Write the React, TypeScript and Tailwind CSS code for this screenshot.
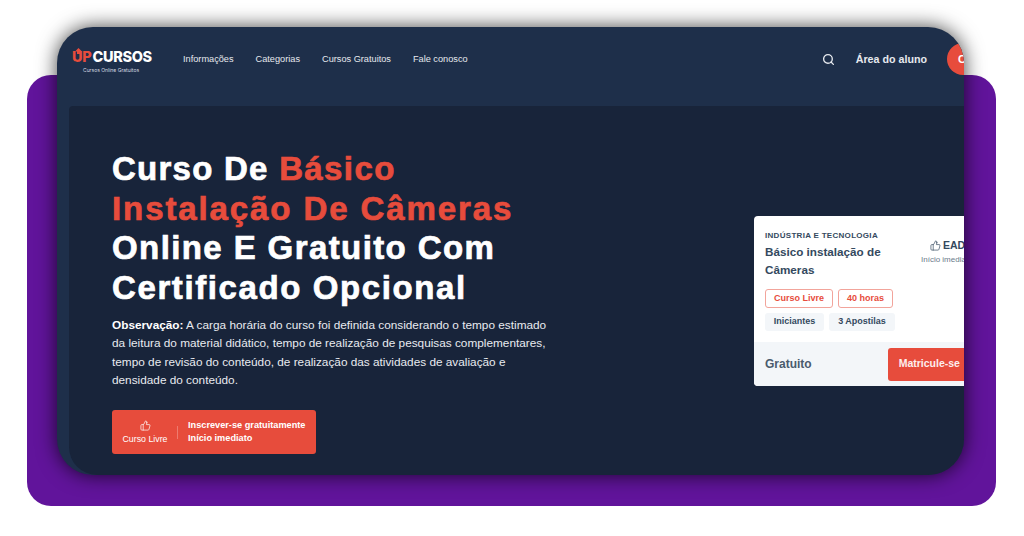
import { Search, ThumbsUp } from "lucide-react";

export default function App() {
  return (
    <div className="grid h-[536px] w-[1024px] overflow-hidden bg-white font-['Liberation_Sans',Arial,sans-serif]">
      <div className="col-start-1 row-start-1 ml-[27px] mt-[75px] h-[431px] w-[969px] rounded-[24px] bg-[#61149b]" />
      <div className="col-start-1 row-start-1 ml-[57px] mt-[27px] flex h-[448px] w-[907px] flex-col overflow-hidden rounded-[36px] bg-[#1e2f4a] shadow-[0_0_20px_rgba(0,0,0,0.75)]">
        <header className="flex h-[79px] shrink-0 items-start pl-[15px] pt-[20px]">
          <div className="flex w-[82px] shrink-0 flex-col">
            <div className="relative flex h-[20px] items-center font-['Inter',sans-serif] text-[14.5px] font-extrabold leading-[20px] tracking-[-0.3px]">
              <span className="text-[#e74c3c]">UP</span>
              <span className="ml-[1px] text-white">CURSOS</span>
              <svg className="absolute left-[3px] top-[1px]" width="7" height="6" viewBox="0 0 7 6">
                <path d="M3.5 0 L7 3.5 H5 V6 H2 V3.5 H0 Z" fill="#e74c3c" />
              </svg>
            </div>
            <div className="ml-[11px] font-['Inter',sans-serif] text-[5px] leading-[6px] text-[#d5dae2]">Cursos Online Gratuitos</div>
          </div>
          <nav className="ml-[29px] flex h-[25px] items-center gap-[22px] text-[9.2px] text-[#e6e9ee]">
            <span>Informações</span>
            <span>Categorias</span>
            <span>Cursos Gratuitos</span>
            <span>Fale conosco</span>
          </nav>
          <div className="ml-auto flex h-[24px] items-center">
            <Search className="text-[#e6e9ee]" size={13} strokeWidth={2.5} />
            <span className="ml-[21px] text-[10.7px] font-bold text-[#e6e9ee]">Área do aluno</span>
            <span className="-mr-[17px] ml-[20px] flex h-[32px] w-[34px] shrink-0 items-center justify-start rounded-full bg-[#e74c3c] pl-[11px] text-[11px] font-bold text-white">C</span>
          </div>
        </header>
        <main className="ml-[12px] flex min-h-0 flex-1 items-start overflow-hidden rounded-bl-[28px] rounded-tl-[4px] bg-[#18243a] pl-[43px]">
          <div className="w-[440px] shrink-0 pt-[43px]">
            <h1 className="text-[33px] font-bold leading-[39.5px] tracking-[1.4px] text-white [-webkit-text-stroke:0.7px_currentColor]">
              <span className="tracking-[1.25px]">Curso De </span>
              <span className="text-[#e74c3c]">Básico</span>
              <br />
              <span className="tracking-[1.9px] text-[#e74c3c]">Instalação De Câmeras</span>
              <br />
              Online E Gratuito Com
              <br />
              <span className="tracking-[1.6px]">Certificado Opcional</span>
            </h1>
            <p className="mt-[9px] text-[11.8px] leading-[18.3px] text-[#e8ebf0]">
              <strong className="font-bold text-white">Observação:</strong> A carga horária do curso foi definida considerando o tempo estimado da leitura do material didático, tempo de realização de pesquisas complementares, tempo de revisão do conteúdo, de realização das atividades de avaliação e densidade do conteúdo.
            </p>
            <button className="mt-[21px] flex h-[44px] w-[204px] items-center rounded-[3px] bg-[#e74c3c] text-white">
              <span className="flex w-[65px] shrink-0 flex-col items-center pl-[1px]">
                <ThumbsUp size={11} strokeWidth={1.5} />
                <span className="mt-[3px] text-[8.8px] leading-[11px]">Curso Livre</span>
              </span>
              <span className="h-[13px] w-px bg-[#ee7b6f]" />
              <span className="ml-[10px] text-left text-[9.2px] font-bold leading-[13px]">
                Inscrever-se gratuitamente
                <br />
                Início imediato
              </span>
            </button>
          </div>
          <aside className="ml-[202px] mt-[110px] flex h-[170px] w-[245px] shrink-0 flex-col overflow-hidden rounded-l-[4px] bg-white">
            <div className="flex min-h-0 flex-1 pl-[11px] pt-[15px]">
              <div className="w-[150px] shrink-0">
                <div className="text-[8px] font-bold leading-[10px] tracking-[0.3px] text-[#34495e]">INDÚSTRIA E TECNOLOGIA</div>
                <div className="mt-[2px] text-[11.7px] font-bold leading-[18px] text-[#34495e]">
                  Básico instalação de
                  <br />
                  Câmeras
                </div>
                <div className="mt-[10px] flex gap-[5px]">
                  <span className="flex h-[19px] w-[68px] items-center justify-center rounded-[3px] border border-[#f2a49b] text-[9px] font-bold text-[#e74c3c]">Curso Livre</span>
                  <span className="flex h-[19px] w-[55px] items-center justify-center rounded-[3px] border border-[#f2a49b] text-[9px] font-bold text-[#e74c3c]">40 horas</span>
                </div>
                <div className="mt-[5px] flex gap-[5px]">
                  <span className="flex h-[18px] w-[59px] items-center justify-center rounded-[3px] bg-[#f3f6f9] text-[9px] font-bold text-[#34495e]">Iniciantes</span>
                  <span className="flex h-[18px] w-[66px] items-center justify-center rounded-[3px] bg-[#f3f6f9] text-[9px] font-bold text-[#34495e]">3 Apostilas</span>
                </div>
              </div>
              <div className="flex flex-col whitespace-nowrap pl-[6px] pt-[8px]">
                <div className="ml-[9px] flex items-center gap-[2px] text-[10.5px] font-bold leading-[12px] text-[#34495e]">
                  <ThumbsUp size={11} strokeWidth={1.5} />
                  EAD
                </div>
                <div className="mt-[4px] text-[8px] leading-[10px] text-[#6b7a8a]">Início imediato</div>
              </div>
            </div>
            <div className="flex h-[44px] shrink-0 items-center bg-[#f3f6f9] pl-[11px]">
              <span className="text-[12px] font-bold text-[#4a5b6d]">Gratuito</span>
              <span className="ml-[76px] flex h-[33px] flex-1 items-center rounded-l-[3px] bg-[#e74c3c] pl-[11px] text-[10.5px] font-bold text-[#fdeeee]">Matricule-se</span>
            </div>
          </aside>
        </main>
      </div>
    </div>
  );
}
